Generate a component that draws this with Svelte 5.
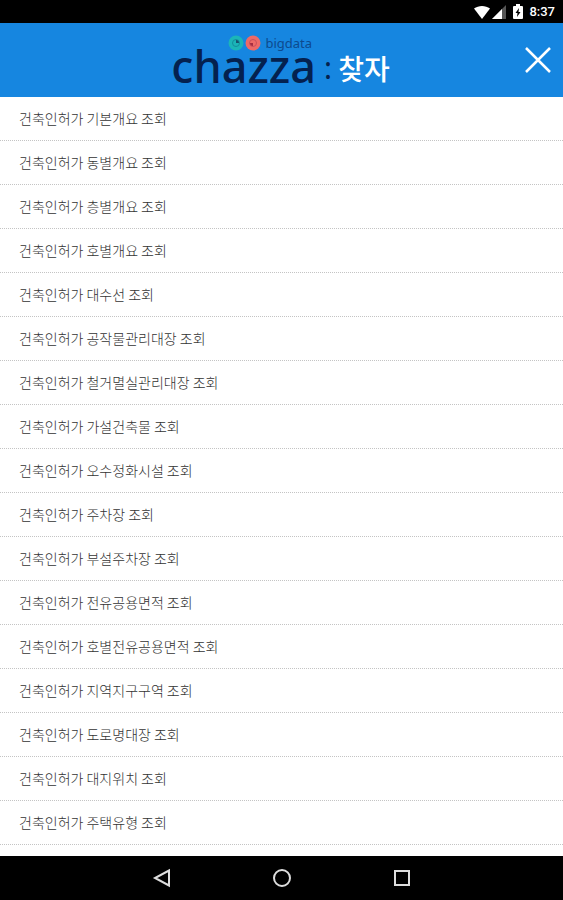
<script lang="ts">
    const items: string[] = [
        '기본개요',
        '동별개요',
        '층별개요',
        '호별개요',
        '대수선',
        '공작물관리대장',
        '철거멸실관리대장',
        '가설건축물',
        '오수정화시설',
        '주차장',
        '부설주차장',
        '전유공용면적',
        '호별전유공용면적',
        '지역지구구역',
        '도로명대장',
        '대지위치',
        '주택유형'
    ];
</script>

<div class="screen">
    <div class="status-bar">
        <svg class="wifi" viewBox="0 0 16 14" aria-hidden="true">
            <path d="M8 14 0 3.6C4.500 0 11.500 0 16 3.600Z" fill="#fff" />
        </svg>
        <svg class="signal" viewBox="0 0 14 14" aria-hidden="true">
            <path d="M14 0V14H0Z" fill="#555" />
            <path d="M10 4V14H0Z" fill="#fff" />
        </svg>
        <svg class="battery" viewBox="0 0 10 15" aria-hidden="true">
            <path d="M3 0h4v2h2q1 0 1 1v11q0 1-1 1H1q-1 0-1-1V3q0-1 1-1h2Z" fill="#fff" />
            <path d="M6 4 2.500 9h2L4 13l3.500-5h-2Z" fill="#000" />
        </svg>
        <span class="clock">8:37</span>
    </div>

    <header>
        <h1 class="logo">
            <span class="brand">
                <span class="tagline">
                    <svg viewBox="0 0 33 16" aria-hidden="true">
                        <circle cx="8" cy="8" r="7.500" fill="#1bb5b8" />
                        <circle cx="8" cy="8" r="3.500" fill="none" stroke="#138d9c" />
                        <path d="M8 8V5a3 3 0 0 1 3 3Z" fill="#17526f" />
                        <circle cx="25" cy="8" r="7.500" fill="#ee6a67" />
                        <circle cx="25" cy="8" r="3.500" fill="none" stroke="#c9505b" />
                        <path d="M25 8v3a3 3 0 0 1-3-3Z" fill="#a52f43" />
                    </svg>
                    bigdata
                </span>
                <span class="wordmark">chazza</span>
            </span>
            <span class="colon">:</span>
            <span class="korean">찾자</span>
        </h1>
        <button class="close" aria-label="닫기">
            <svg viewBox="0 0 26 26" aria-hidden="true">
                <path d="M1 1 25 25M25 1 1 25" fill="none" stroke="#fff" stroke-width="2.500" />
            </svg>
        </button>
    </header>

    <main>
        <ul>
            {#each items as item}
                <li><a href="#top">건축인허가 {item} 조회</a></li>
            {/each}
        </ul>
    </main>

    <nav>
        <button aria-label="뒤로">
            <svg viewBox="0 0 20 20" aria-hidden="true">
                <path d="M17 2.500v15L3 10Z" />
            </svg>
        </button>
        <button aria-label="홈">
            <svg viewBox="0 0 20 20" aria-hidden="true">
                <circle cx="10" cy="10" r="8" />
            </svg>
        </button>
        <button aria-label="최근 앱">
            <svg viewBox="0 0 20 20" aria-hidden="true">
                <rect x="3" y="3" width="14" height="14" />
            </svg>
        </button>
    </nav>
</div>

<style>
    .screen {
        display: flex;
        flex-direction: column;
        min-height: 100vh;
        background: #fff;
        font-family: 'Noto Sans CJK KR', 'Noto Sans', sans-serif;
    }

    svg {
        display: block;
    }

    button {
        padding: 0;
        border: 0;
        background: none;
        cursor: pointer;
    }

    .status-bar {
        display: flex;
        align-items: center;
        justify-content: flex-end;
        height: 23px;
        padding-right: 8px;
        background: #000;
        color: #fff;
    }

    .wifi {
        width: 16px;
        height: 14px;
    }

    .signal {
        width: 14px;
        height: 14px;
        margin-left: 2px;
    }

    .battery {
        width: 10px;
        height: 15px;
        margin-left: 7px;
    }

    .clock {
        margin-left: 6px;
        font: 500 13px/23px Roboto, sans-serif;
    }

    header {
        display: grid;
        grid-template-columns: 1fr auto 1fr;
        align-items: center;
        height: 74px;
        background: #1686e0;
    }

    .logo {
        display: flex;
        align-items: flex-end;
        grid-column: 2;
        margin: 0;
        padding-right: 2px;
        color: #04214f;
        font-weight: 500;
    }

    .brand {
        display: flex;
        flex-direction: column;
    }

    .tagline {
        display: flex;
        align-items: center;
        justify-content: flex-end;
        gap: 4px;
        padding-right: 4px;
        color: #0d4a8e;
        font: 400 13px/12px 'Noto Sans', sans-serif;
    }

    .tagline svg {
        width: 33px;
        height: 16px;
    }

    .wordmark {
        font: 500 45px/30px 'Noto Sans', sans-serif;
        padding-bottom: 4px;
    }

    .colon {
        margin-left: 8px;
        font: 400 30px/34px 'Noto Sans', sans-serif;
    }

    .korean {
        margin-left: 6px;
        color: #fff;
        font-size: 28px;
        line-height: 34px;
    }

    .close {
        justify-self: end;
        margin-right: 12px;
    }

    .close svg {
        width: 26px;
        height: 26px;
    }

    main {
        flex: 1;
    }

    ul {
        margin: 0;
        padding: 0;
        list-style: none;
    }

    li {
        border-bottom: 1px dotted #c4c4c4;
    }

    a {
        display: block;
        padding: 0 19px;
        color: #333;
        font-size: 14px;
        font-weight: 300;
        line-height: 43px;
        text-decoration: none;
    }

    nav {
        display: flex;
        align-items: center;
        justify-content: center;
        gap: 100px;
        height: 44px;
        background: #000;
    }

    nav svg {
        width: 20px;
        height: 20px;
        fill: none;
        stroke: #ddd;
        stroke-width: 2;
    }
</style>
